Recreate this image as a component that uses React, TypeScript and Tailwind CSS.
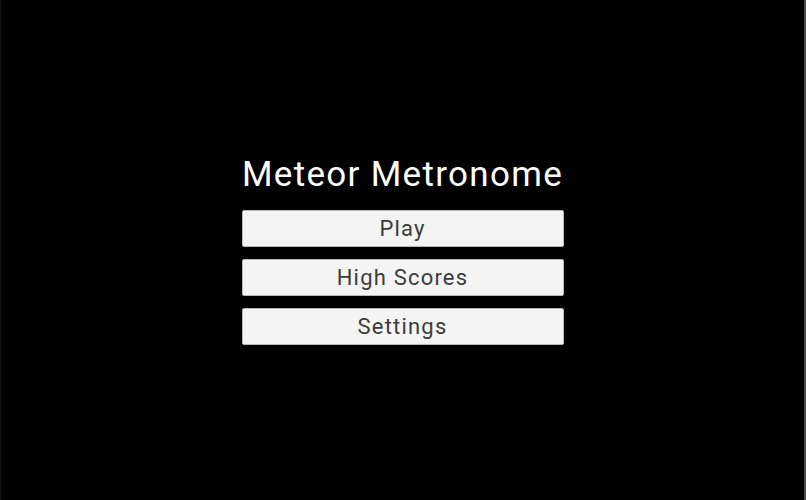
import React from "react";

export default function App() {
  const items = ["Play", "High Scores", "Settings"];
  return (
    <div className="w-[806px] h-[500px] bg-black border-l border-l-[#151515] border-r-2 border-r-[#4a4a4a] flex items-center justify-center overflow-hidden">
      <div className="w-[322px] flex flex-col items-stretch" style={{ fontFamily: "Roboto, 'Noto Sans', sans-serif" }}>
        <h1 className="text-white text-center text-[35px] leading-[40px] tracking-[1.3px] mb-[15px] font-normal">
          Meteor Metronome
        </h1>
        <div className="flex flex-col gap-[12px]">
          {items.map((t) => (
            <button
              key={t}
              className="h-[37px] bg-[#f4f4f4] border border-[#b8b8b8] rounded-[2px] text-[#3c3c3c] text-[22px] leading-none tracking-[1.2px] flex items-center justify-center"
            >
              {t}
            </button>
          ))}
        </div>
      </div>
    </div>
  );
}
